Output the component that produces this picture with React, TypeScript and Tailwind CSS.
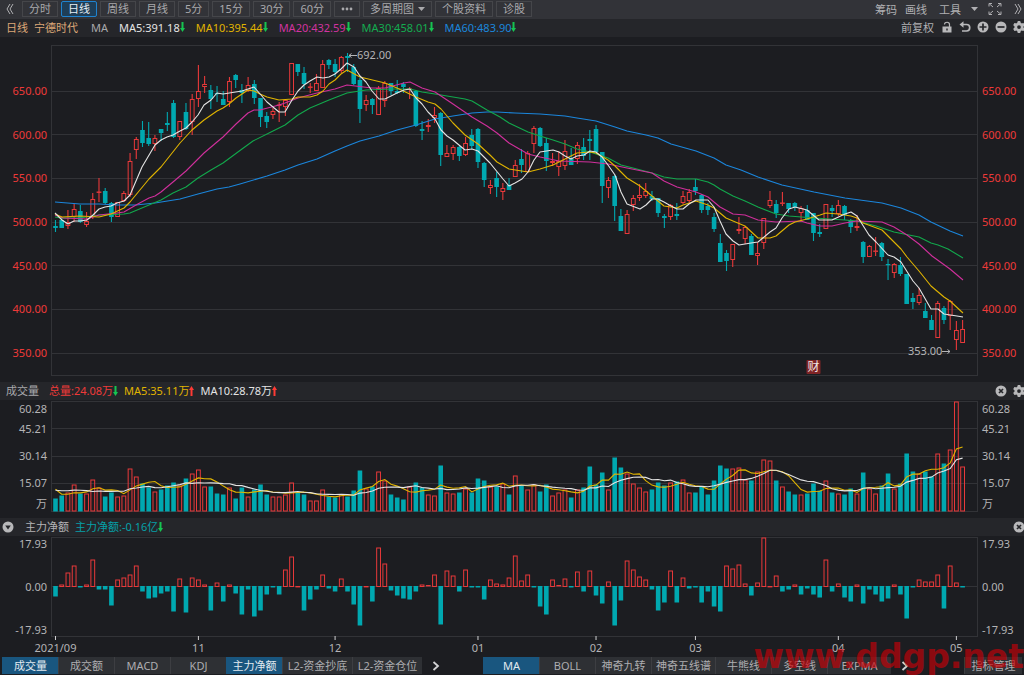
import type { ReactNode } from "react";
import { FaGear } from "react-icons/fa6";

const RED = "#e8393a";
const TEAL = "#00a8b0";
const GRID = "#323337";

// plot area shared by the three charts
const PLOT_LEFT = 51;
const PLOT_WIDTH = 927;
const FIRST_X = 55.5;
const STEP = 6.213;

const xAt = (i: number) => FIRST_X + i * STEP;

// [rising, high, body top, body bottom, low]
type Candle = [number, number, number, number, number];

const candles: Candle[] = [
    [0, 220, 226, 228, 232], [0, 218, 220, 228, 228], [1, 210, 222, 226, 229], [1, 204, 209, 217, 222],
    [0, 205, 211, 222, 223], [1, 212, 221, 225, 227], [1, 193, 199, 217, 219], [1, 178, 192, 192, 202],
    [0, 188, 191, 203, 204], [0, 202, 203, 217, 222], [1, 202, 202, 217, 217], [1, 191, 193, 201, 202],
    [1, 153, 161, 195, 197], [1, 137, 139, 150, 159], [0, 121, 130, 143, 147], [0, 122, 138, 144, 146],
    [1, 135, 138, 144, 151], [0, 129, 129, 133, 141], [0, 112, 123, 125, 131], [0, 100, 103, 137, 138],
    [1, 121, 121, 137, 140], [0, 103, 112, 129, 130], [1, 94, 99, 122, 135], [1, 65, 91, 99, 107],
    [1, 76, 84, 87, 93], [0, 85, 90, 99, 109], [0, 86, 93, 94, 102], [0, 91, 99, 105, 105],
    [1, 77, 81, 102, 107], [0, 74, 75, 80, 88], [0, 84, 90, 93, 103], [1, 77, 85, 91, 92],
    [0, 80, 84, 98, 104], [0, 98, 98, 117, 127], [0, 112, 116, 122, 128], [1, 108, 111, 115, 119],
    [1, 102, 105, 106, 122], [1, 100, 100, 107, 116], [1, 63, 63, 95, 95], [0, 64, 64, 72, 76],
    [0, 67, 73, 84, 89], [1, 83, 87, 88, 93], [1, 74, 83, 91, 91], [1, 60, 64, 88, 88],
    [0, 59, 60, 65, 69], [0, 59, 64, 72, 77], [1, 56, 57, 71, 73], [0, 53, 56, 58, 72],
    [0, 64, 67, 84, 85], [0, 78, 80, 109, 123], [1, 95, 100, 105, 111], [0, 98, 99, 105, 114],
    [1, 86, 88, 115, 115], [1, 81, 83, 101, 107], [0, 83, 83, 91, 95], [0, 80, 91, 93, 94],
    [0, 82, 84, 87, 93], [1, 87, 89, 90, 99], [0, 90, 91, 126, 127], [0, 121, 129, 131, 140],
    [1, 119, 125, 127, 132], [1, 107, 115, 118, 123], [0, 112, 113, 155, 166], [1, 145, 153, 157, 157],
    [1, 145, 147, 154, 160], [0, 146, 147, 156, 161], [1, 137, 143, 155, 156], [0, 129, 135, 146, 149],
    [0, 128, 129, 162, 168], [0, 162, 163, 180, 187], [1, 180, 185, 188, 194], [0, 172, 178, 187, 197],
    [1, 183, 188, 192, 200], [0, 178, 185, 190, 190], [1, 160, 165, 177, 177], [0, 149, 159, 165, 173],
    [1, 151, 153, 172, 172], [1, 126, 128, 144, 153], [0, 127, 128, 146, 147], [0, 138, 143, 161, 171],
    [1, 153, 161, 163, 166], [1, 151, 161, 167, 176], [1, 140, 151, 166, 170], [0, 148, 159, 165, 165],
    [1, 142, 145, 159, 164], [0, 138, 147, 156, 160], [0, 130, 139, 141, 160], [0, 125, 129, 152, 152],
    [0, 152, 152, 186, 203], [1, 177, 180, 188, 198], [0, 175, 176, 206, 221], [0, 209, 216, 231, 231],
    [1, 210, 214, 234, 234], [1, 195, 198, 205, 211], [1, 184, 195, 198, 201], [1, 183, 191, 196, 198],
    [0, 191, 196, 199, 201], [0, 198, 198, 213, 217], [0, 214, 216, 218, 228], [1, 204, 205, 217, 220],
    [0, 203, 214, 216, 220], [1, 191, 196, 203, 204], [1, 189, 192, 201, 203], [0, 179, 187, 191, 195],
    [0, 194, 195, 210, 213], [0, 203, 206, 210, 215], [0, 213, 217, 229, 232], [0, 234, 243, 262, 262],
    [0, 250, 253, 261, 271], [1, 244, 244, 260, 267], [1, 217, 229, 231, 234], [1, 226, 227, 239, 244],
    [0, 234, 236, 255, 255], [1, 242, 253, 256, 265], [1, 218, 218, 243, 249], [1, 191, 200, 206, 208],
    [0, 200, 204, 213, 218], [1, 192, 203, 204, 206], [0, 203, 203, 209, 213], [0, 202, 203, 207, 211],
    [1, 206, 208, 213, 222], [0, 205, 210, 220, 220], [0, 213, 213, 233, 241], [0, 224, 232, 234, 237],
    [1, 204, 204, 229, 229], [0, 205, 208, 211, 217], [1, 200, 205, 214, 216], [0, 205, 206, 215, 220],
    [0, 219, 220, 227, 233], [1, 215, 226, 228, 231], [0, 241, 242, 257, 263], [1, 245, 246, 257, 257],
    [1, 237, 251, 252, 256], [0, 242, 243, 257, 261], [0, 259, 264, 265, 280], [1, 263, 264, 273, 278],
    [0, 257, 265, 274, 276], [0, 274, 274, 304, 304], [0, 293, 298, 302, 309], [1, 288, 295, 303, 305],
    [0, 303, 311, 318, 318], [0, 315, 320, 330, 330], [1, 301, 303, 338, 338], [0, 306, 308, 320, 324],
    [1, 300, 301, 316, 330], [1, 321, 330, 340, 350], [1, 320, 329, 343, 343],
];

const maLines = [
    {
        color: "#1b86dc",
        points: "55,202 80,204 99,204 117,205 136,205 155,203 180,199 198,194 217,189 229,187 240,184 267,176 285,170 298,165 317,159 335,151 347,146 360,141 379,136 397,130 416,125 435,119 453,116 472,113 487,112 497,112 515,113 540,114 565,116 577,118 596,121 615,127 627,131 646,135 658,138 671,144 696,151 714,158 726,165 741,170 758,177 782,185 814,192 845,198 882,203 901,208 919,215 931,222 950,231 963,236",
    },
    {
        color: "#12a84c",
        points: "55,217 62,218 80,218 99,215 124,214 130,213 149,205 161,200 173,193 186,187 198,178 211,170 223,163 242,149 253,141 273,131 285,125 298,115 310,108 329,100 347,93 366,90 391,89 410,89 422,92 435,94 453,97 465,99 472,101 487,110 500,117 509,123 528,132 540,136 553,140 565,144 577,149 590,152 608,158 621,165 633,168 652,173 664,177 677,179 696,179 708,182 714,185 720,189 733,196 745,201 758,207 776,214 789,216 814,218 845,220 857,221 876,226 894,232 919,237 931,243 938,245 948,249 963,258",
    },
    {
        color: "#cf2f9b",
        points: "55,215 63,218 87,219 99,215 117,213 124,212 136,205 149,198 155,196 161,192 173,182 186,171 198,159 204,153 217,142 223,137 236,124 248,113 254,110 260,110 279,105 285,103 298,98 317,93 335,89 347,85 372,88 385,88 404,83 410,82 422,88 435,92 453,104 472,117 487,126 497,133 509,143 528,154 540,157 559,161 590,162 608,164 627,168 652,173 664,181 677,187 696,192 708,197 720,207 733,214 745,215 758,220 776,222 801,221 807,223 820,226 832,226 845,223 857,221 882,222 894,227 907,235 919,244 932,256 950,269 963,280",
    },
    {
        color: "#e0b400",
        points: "55,214 62,217 80,216 99,217 111,214 124,208 130,202 149,179 161,167 180,143 192,130 204,120 217,111 223,108 229,104 236,98 248,90 254,91 260,94 267,97 279,100 292,99 298,97 310,97 317,95 323,91 329,84 335,80 341,74 347,70 360,77 385,83 397,88 416,97 428,102 435,104 441,109 453,123 465,135 478,144 490,155 497,162 509,169 528,172 540,169 553,165 565,159 577,153 590,152 596,153 608,160 615,166 627,178 640,186 652,196 658,201 664,206 677,208 683,205 696,201 708,205 714,208 726,218 733,221 745,226 758,238 770,238 776,236 789,225 795,222 807,219 820,215 826,213 838,214 851,216 857,218 863,223 882,230 901,249 907,257 919,271 931,286 944,297 950,301 963,313",
    },
    {
        color: "#e4e4e4",
        points: "55,213 62,220 68,224 74,221 80,221 87,220 93,215 99,209 105,207 111,206 117,203 124,201 130,195 142,167 155,145 161,140 167,137 173,135 180,131 186,128 192,122 198,115 204,105 211,100 217,93 223,94 242,91 254,87 261,95 267,102 273,107 279,112 285,112 292,100 298,91 304,85 310,81 317,77 323,78 329,77 335,74 341,69 347,63 354,67 360,76 366,82 372,91 379,99 385,99 391,96 397,93 404,90 410,89 416,98 422,104 428,112 435,119 441,130 447,136 453,140 465,150 472,149 478,151 484,157 490,163 503,179 509,186 515,183 522,179 528,172 534,160 540,152 553,150 559,152 565,156 571,159 577,156 584,155 590,151 596,152 602,157 608,165 615,175 621,192 627,204 640,209 646,205 652,199 658,199 664,202 671,206 677,209 683,209 689,204 696,200 708,200 714,207 720,221 726,234 733,241 739,245 751,243 758,242 770,232 776,228 782,218 789,209 795,207 807,210 819,220 832,220 845,214 851,212 857,216 869,235 876,242 888,255 894,257 901,262 913,281 919,288 931,309 938,309 944,314 957,316 963,317",
    },
];

// trading days before the first visible bar, needed by the averages
const earlierVolumes = [20, 20, 20, 20, 21, 41, 19, 19, 19];

const volumes = [
    13, 16, 19, 27, 18, 18, 32, 24, 15, 19, 15, 16, 43, 35, 28, 24, 20, 22, 26, 29, 26, 33, 38, 42, 25,
    25, 18, 17, 24, 13, 24, 15, 22, 27, 17, 15, 15, 17, 29, 19, 17, 11, 11, 22, 15, 14, 17, 15, 21, 41,
    23, 25, 40, 31, 17, 14, 12, 25, 29, 24, 17, 16, 46, 19, 18, 19, 23, 19, 33, 31, 25, 25, 28, 17, 36,
    26, 22, 27, 20, 27, 16, 19, 22, 14, 22, 24, 45, 27, 39, 22, 54, 44, 38, 28, 24, 20, 22, 29, 26, 29,
    30, 32, 19, 19, 25, 17, 31, 46, 43, 43, 44, 32, 31, 40, 52, 51, 31, 25, 20, 17, 17, 18, 28, 21, 31,
    19, 18, 17, 23, 18, 39, 23, 18, 26, 38, 23, 28, 58, 40, 38, 40, 35, 58, 48, 62, 110, 45,
];

const netFlows = [
    -10, 2, 14, 21, -1, 2, 27, -3, -3, -19, 7, 9, 12, 21, -5, -12, -11, -7, -5, -25, 8, -26, 9, 7, 2,
    -24, 4, -15, 2, -7, -28, -3, -30, -24, -8, -1, -8, 17, 30, 0, -24, -13, -3, 12, -2, -5, 8, -5, -18, -39,
    0, -15, 39, 23, -4, -9, -12, -13, -5, 2, 1, 12, -38, 16, 11, -5, 17, -1, -1, -13, 7, 3, 2, 9, 31,
    6, 12, -1, -20, -28, 7, 1, 8, -1, 15, -5, 16, -9, -17, 5, -39, -14, 26, 17, 10, 7, -3, -24, -16, 16,
    -16, 9, -2, -1, -16, -5, -20, -25, 21, 18, 22, 3, -9, 4, 49, 0, 11, -5, -3, 2, -8, -2, -8, -11, 27,
    -5, 3, -11, -15, 2, -17, -3, -8, -15, -12, 2, -8, -32, -1, 7, 5, 5, 12, -22, 21, 4, -1,
];

const months = [
    { label: "2021/09", index: 0 },
    { label: "11", index: 23 },
    { label: "12", index: 45 },
    { label: "01", index: 68 },
    { label: "02", index: 87 },
    { label: "03", index: 103 },
    { label: "04", index: 126 },
    { label: "05", index: 145 },
];

const priceTicks = ["650.00", "600.00", "550.00", "500.00", "450.00", "400.00", "350.00"];
const periods = ["分时", "日线", "周线", "月线", "5分", "15分", "30分", "60分"];

const averageLine = (days: number, base: number) => {
    const all = [...earlierVolumes, ...volumes];
    return volumes
        .map((_, i) => {
            const end = i + earlierVolumes.length + 1;
            const sum = all.slice(end - days, end).reduce((a, b) => a + b, 0);
            return `${xAt(i).toFixed(1)},${(base - sum / days).toFixed(1)}`;
        })
        .join(" ");
};

const Bar = ({ x, top, bottom, hollow }: { x: number; top: number; bottom: number; hollow: boolean }) => {
    if (hollow) {
        const height = bottom - top - 1;
        if (height < 1) {
            return <rect x={x - 2.4} y={top - 0.5} width={4.8} height={1.4} fill={RED} />;
        }
        return <rect x={x - 1.9} y={top + 0.5} width={3.8} height={height} fill="none" stroke={RED} />;
    }
    return <rect x={x - 2.3} y={top} width={4.6} height={Math.max(bottom - top, 1.2)} fill={TEAL} />;
};

const PriceChart = () => (
    <svg
        className="block h-[331px] w-full"
        viewBox={`${PLOT_LEFT} 45 ${PLOT_WIDTH} 331`}
        preserveAspectRatio="none"
        role="img"
        aria-label="日线 K线图"
    >
        <rect x="51.5" y="45.5" width="926" height="330" fill="none" stroke={GRID} />
        {priceTicks.map((tick, i) => (
            <line key={tick} x1="51" x2="978" y1={Math.floor(91 + i * 43.67) + 0.5} y2={Math.floor(91 + i * 43.67) + 0.5} stroke={GRID} />
        ))}
        {candles.map(([up, high, top, bottom, low], i) => (
            <g key={i}>
                <path
                    d={`M${xAt(i)} ${high}V${top}M${xAt(i)} ${bottom}V${low}`}
                    stroke={up ? RED : TEAL}
                    strokeWidth="1.1"
                />
                <Bar x={xAt(i)} top={top} bottom={bottom} hollow={up === 1} />
            </g>
        ))}
        {maLines.map((line) => (
            <polyline key={line.color} points={line.points} fill="none" stroke={line.color} strokeWidth="1.1" strokeLinejoin="round" />
        ))}
        <path d="M349 55.5H357M351.5 53.5L349 55.5L351.5 57.5" fill="none" stroke="#b4b4b6" />
        <text x="357" y="59" fontSize="11" fill="#b4b4b6">692.00</text>
        <text x="908" y="355" fontSize="11" fill="#b4b4b6">353.00</text>
        <path d="M942 351.5H950M947.5 349.5L950 351.5L947.5 353.5" fill="none" stroke="#b4b4b6" />
        <rect x="806.5" y="360" width="14" height="14" rx="1" fill="#7f2426" />
        <text x="813.5" y="371" fontSize="12" fill="#f0e4e4" textAnchor="middle">财</text>
    </svg>
);

const VolumeChart = () => (
    <svg
        className="block h-[111px] w-full"
        viewBox={`${PLOT_LEFT} 401 ${PLOT_WIDTH} 111`}
        preserveAspectRatio="none"
        role="img"
        aria-label="成交量"
    >
        <rect x="51.5" y="401.5" width="926" height="110" fill="none" stroke={GRID} />
        {[428.5, 456.5, 483.5].map((y) => (
            <line key={y} x1="51" x2="978" y1={y} y2={y} stroke={GRID} />
        ))}
        {volumes.map((v, i) => (
            <Bar key={i} x={xAt(i)} top={511.5 - v} bottom={511.5} hollow={candles[i][0] === 1} />
        ))}
        <polyline points={averageLine(5, 511.5)} fill="none" stroke="#e0b400" strokeWidth="1.1" />
        <polyline points={averageLine(10, 511.5)} fill="none" stroke="#e4e4e4" strokeWidth="1.1" />
    </svg>
);

const FlowChart = () => (
    <svg
        className="block h-[120px] w-full overflow-visible"
        viewBox={`${PLOT_LEFT} 537 ${PLOT_WIDTH} 120`}
        preserveAspectRatio="none"
        role="img"
        aria-label="主力净额"
    >
        <rect x="51.5" y="537.5" width="926" height="99" fill="none" stroke={GRID} />
        <line x1="51" x2="978" y1="586.5" y2="586.5" stroke={GRID} />
        {netFlows.map((v, i) => (
            <Bar key={i} x={xAt(i)} top={v < 0 ? 586 : 586.5 - v} bottom={v < 0 ? 586.5 - v : 587} hollow={v >= 0} />
        ))}
        {months.map(({ label, index }) => (
            <g key={label}>
                <line x1={xAt(index)} x2={xAt(index)} y1="636" y2="640" stroke="#d0d0d2" />
                <text x={xAt(index)} y="652" fontSize="11" fill="#b4b4b6" textAnchor="middle">
                    {label}
                </text>
            </g>
        ))}
    </svg>
);

const Trend = ({ up = false }: { up?: boolean }) => (
    <svg className="h-2.5 w-[5px] shrink-0" viewBox="0 0 5 10" aria-hidden="true">
        {up ? (
            <path d="M2.5 0L5 4H3.5V10H1.5V4H0Z" fill="#ff3a34" />
        ) : (
            <path d="M2.5 10L5 6H3.5V0H1.5V6H0Z" fill="#16c451" />
        )}
    </svg>
);

const Reading = ({ className, up, children }: { className: string; up?: boolean; children: ReactNode }) => (
    <span className={`flex items-center ${className}`}>
        {children}
        <Trend up={up} />
    </span>
);

const IconButton = ({ label, children }: { label: string; children: ReactNode }) => (
    <button type="button" aria-label={label} className="flex h-3.5 w-3.5 shrink-0 items-center justify-center text-[#b8b8ba]">
        {children}
    </button>
);

// filled disc with a dark sign cut into it
const DiscIcon = ({ d, filled = false }: { d: string; filled?: boolean }) => (
    <svg className="h-3 w-3" viewBox="0 0 12 12" aria-hidden="true">
        <circle cx="6" cy="6" r="5.5" fill="currentColor" />
        <path d={d} fill={filled ? "#25262a" : "none"} stroke={filled ? "none" : "#25262a"} strokeWidth="1.7" />
    </svg>
);

const ToolButton = ({ active = false, children }: { active?: boolean; children: ReactNode }) => (
    <button
        type="button"
        aria-pressed={active}
        className={`flex h-4 items-center border px-1.5 pb-px ${
            active ? "rounded-xs border-[#1f83cf] bg-[#1f3e57] text-[#e6eef5]" : "border-[#45464a] text-[#a9a9ac]"
        }`}
    >
        {children}
    </button>
);

const Tab = ({ label, width = "w-14", active = false }: { label: string; width?: string; active?: boolean }) => (
    <button
        type="button"
        aria-pressed={active}
        className={`h-[17px] shrink-0 border-l text-center ${width} ${
            active ? "border-[#19567f] bg-[#19567f] text-[#e2eaf0]" : "border-[#3d3e42] bg-[#2e3034] text-[#adadb0]"
        }`}
    >
        {label}
    </button>
);

const Chevrons = ({ flip = false }: { flip?: boolean }) => (
    <svg className="h-3 w-2" viewBox="0 0 8 12" fill="none" stroke="currentColor" aria-hidden="true">
        <path d={flip ? "M1 1L4 6L1 11M4 1L7 6L4 11" : "M4 1L1 6L4 11M7 1L4 6L7 11"} />
    </svg>
);

const MoreArrow = () => (
    <svg className="h-2.5 w-2" viewBox="0 0 8 10" fill="none" stroke="#d2d2d4" strokeWidth="1.8" aria-hidden="true">
        <path d="M1.5 1L6 5L1.5 9" />
    </svg>
);

const Caret = () => (
    <svg className="h-1 w-[7px]" viewBox="0 0 7 4" fill="currentColor" aria-hidden="true">
        <path d="M0 0H7L3.5 4Z" />
    </svg>
);

const Axis = ({ labels, side, className }: { labels: string[]; side: "left" | "right"; className: string }) => (
    <div
        className={`flex shrink-0 flex-col leading-[14px] ${
            side === "left" ? "w-[51px] pr-1 text-right" : "w-[46px] pl-1"
        } ${className}`}
    >
        {labels.map((label) => (
            <span key={label}>{label}</span>
        ))}
    </div>
);

const volumeAxis =
    "pt-0.5 text-[#b4b4b6] [&>span:nth-child(2)]:mt-1.5 [&>span:nth-child(3)]:mt-[13px] [&>span:nth-child(4)]:mt-[13px] [&>span:nth-child(5)]:mt-[7px]";
const volumeTicks = ["60.28", "45.21", "30.14", "15.07", "万"];
const flowTicks = ["17.93", "0.00", "-17.93"];

const App = () => {
    return (
        <div className="relative w-full overflow-hidden bg-[#1c1d21] font-['Noto_Sans','Noto_Sans_CJK_SC',sans-serif] text-[11px] leading-none whitespace-nowrap">
            {/* Period toolbar */}
            <header className="flex h-[19px] items-center justify-between bg-[#323338] pb-px text-[#b0b0b3]">
                <div className="flex items-center gap-[3px]">
                    <button type="button" aria-label="收起" className="flex w-[19px] justify-center">
                        <Chevrons />
                    </button>
                    {periods.map((period) => (
                        <ToolButton key={period} active={period === "日线"}>
                            {period}
                        </ToolButton>
                    ))}
                    <ToolButton>
                        <svg className="h-1 w-3" viewBox="0 0 12 4" fill="currentColor" aria-label="更多">
                            <circle cx="2" cy="2" r="1.4" />
                            <circle cx="6" cy="2" r="1.4" />
                            <circle cx="10" cy="2" r="1.4" />
                        </svg>
                    </ToolButton>
                    <ToolButton>
                        <span className="mr-1">多周期图</span>
                        <Caret />
                    </ToolButton>
                    <ToolButton>个股资料</ToolButton>
                    <ToolButton>诊股</ToolButton>
                </div>
                <div className="flex items-center">
                    <button type="button">筹码</button>
                    <button type="button" className="ml-2">画线</button>
                    <button type="button" className="ml-3 flex items-center gap-2.5">
                        工具
                        <Caret />
                    </button>
                    <button type="button" aria-label="全屏" className="ml-2.5">
                        <svg className="h-3.5 w-3.5" viewBox="0 0 14 14" fill="none" stroke="currentColor" aria-hidden="true">
                            <path d="M1 4.5V1.5H4M1.5 2L5 5M10 1.5H13V4.5M12.5 2L9 5M1 9.5V12.5H4M1.5 12L5 9M13 9.5V12.5H10M12.5 12L9 9" />
                        </svg>
                    </button>
                    <button type="button" aria-label="展开" className="mr-0.5 ml-3">
                        <Chevrons flip />
                    </button>
                </div>
            </header>

            {/* Moving average readings */}
            <div className="flex h-[18px] items-center justify-between bg-[#25262a] pb-0.5 pl-1.5">
                <div className="flex items-center gap-[11px]">
                    <div className="flex gap-1.5 text-[#dda878]">
                        <span>日线</span>
                        <span>宁德时代</span>
                    </div>
                    <span className="ml-0.5 text-[#a9a9ac]">MA</span>
                    <Reading className="text-[#e4e4e4]">MA5:391.18</Reading>
                    <Reading className="text-[#e0b400]">MA10:395.44</Reading>
                    <Reading className="text-[#d233a0]">MA20:432.59</Reading>
                    <Reading className="text-[#14ac50]">MA30:458.01</Reading>
                    <Reading className="text-[#1b86dc]">MA60:483.90</Reading>
                </div>
                <div className="-mr-0.5 flex items-center gap-1 text-[#b0b0b3]">
                    <button type="button" className="mr-0.5">前复权</button>
                    <IconButton label="锁定">
                        <svg className="h-3 w-3" viewBox="0 0 12 12" aria-hidden="true">
                            <path d="M3.5 3.5C3.5 0.5 8.5 0.5 8.5 3.5V6" fill="none" stroke="currentColor" strokeWidth="1.2" />
                            <path fillRule="evenodd" d="M1.5 5.5H10.5V11.5H1.5ZM5.3 7.5V9.5H6.7V7.5Z" fill="currentColor" />
                        </svg>
                    </IconButton>
                    <IconButton label="撤销">
                        <svg className="h-3 w-3" viewBox="0 0 12 12" aria-hidden="true">
                            <path d="M3 3.5H7.5C11.8 3.5 11.8 10 7.5 10H3" fill="none" stroke="currentColor" strokeWidth="1.7" />
                            <path d="M0.5 3.5L4.5 0.3V6.7Z" fill="currentColor" />
                        </svg>
                    </IconButton>
                    <IconButton label="放大">
                        <DiscIcon d="M6 2.5V9.5M2.5 6H9.5" />
                    </IconButton>
                    <IconButton label="缩小">
                        <DiscIcon d="M2.5 6H9.5" />
                    </IconButton>
                    <IconButton label="设置">
                        <FaGear size={12} />
                    </IconButton>
                </div>
            </div>

            {/* Candles */}
            <section className="flex h-[345px]">
                <Axis labels={priceTicks} side="left" className="justify-between pt-[47px] pb-[22px] text-[#ee3a39]" />
                <div className="min-w-0 flex-1 pt-2">
                    <PriceChart />
                </div>
                <Axis labels={priceTicks} side="right" className="justify-between pt-[47px] pb-[22px] text-[#ee3a39]" />
            </section>

            {/* Volume */}
            <div className="flex h-[18px] items-center justify-between bg-[#25262a] pb-px pl-1.5">
                <div className="flex items-center gap-1.5">
                    <span className="mr-1 text-[#a9a9ac]">成交量</span>
                    <Reading className="text-[#ee3a39]">总量:24.08万</Reading>
                    <Reading up className="text-[#e0b400]">MA5:35.11万</Reading>
                    <Reading up className="text-[#e4e4e4]">MA10:28.78万</Reading>
                </div>
                <div className="-mr-0.5 flex items-center gap-1">
                    <IconButton label="关闭成交量">
                        <DiscIcon d="M4 4L8 8M8 4L4 8" />
                    </IconButton>
                    <IconButton label="成交量设置">
                        <FaGear size={12} />
                    </IconButton>
                </div>
            </div>
            <section className="flex h-[118px]">
                <Axis labels={volumeTicks} side="left" className={volumeAxis} />
                <div className="min-w-0 flex-1 pt-px">
                    <VolumeChart />
                </div>
                <Axis labels={volumeTicks} side="right" className={volumeAxis} />
            </section>

            {/* Net flow */}
            <div className="flex h-[18px] items-center justify-between bg-[#25262a] pb-px pl-px">
                <div className="flex items-center">
                    <IconButton label="选择指标">
                        <DiscIcon d="M3.2 4.5H8.8L6 8.5Z" filled />
                    </IconButton>
                    <span className="ml-2.5 text-[#b4b4b6]">主力净额</span>
                    <Reading className="ml-1.5 text-[#06a0a8]">主力净额:-0.16亿</Reading>
                </div>
                <div className="-mr-0.5">
                    <IconButton label="关闭主力净额">
                        <DiscIcon d="M4 4L8 8M8 4L4 8" />
                    </IconButton>
                </div>
            </div>
            <section className="flex h-[121px] pt-px">
                <Axis labels={flowTicks} side="left" className="h-[100px] justify-between text-[#b4b4b6]" />
                <div className="min-w-0 flex-1">
                    <FlowChart />
                </div>
                <Axis labels={flowTicks} side="right" className="h-[100px] justify-between text-[#b4b4b6]" />
            </section>

            {/* Indicator tabs */}
            <footer className="flex h-[18px] items-start px-0.5">
                <Tab label="成交量" active />
                <Tab label="成交额" />
                <Tab label="MACD" />
                <Tab label="KDJ" />
                <Tab label="主力净额" active />
                <Tab label="L2-资金抄底" width="w-[70px]" />
                <Tab label="L2-资金仓位" width="w-[70px]" />
                <button type="button" aria-label="更多副图指标" className="mr-[33px] flex h-[17px] w-7 items-center justify-center">
                    <MoreArrow />
                </button>
                <Tab label="MA" active />
                <Tab label="BOLL" />
                <Tab label="神奇九转" />
                <Tab label="神奇五线谱" width="w-16" />
                <Tab label="牛熊线" />
                <Tab label="多空线" />
                <Tab label="EXPMA" width="w-16" />
                <button type="button" aria-label="更多主图指标" className="flex h-[17px] w-7 items-center justify-center">
                    <MoreArrow />
                </button>
                <div className="ml-auto">
                    <Tab label="指标管理" width="w-[58px]" />
                </div>
            </footer>

            <div className="pointer-events-none absolute right-0 bottom-0 h-9 font-['DejaVu_Sans',sans-serif] text-[33px] leading-9 font-bold text-[#c80006]/65">
                www.ddgp.net
            </div>
        </div>
    );
};

export default App;
